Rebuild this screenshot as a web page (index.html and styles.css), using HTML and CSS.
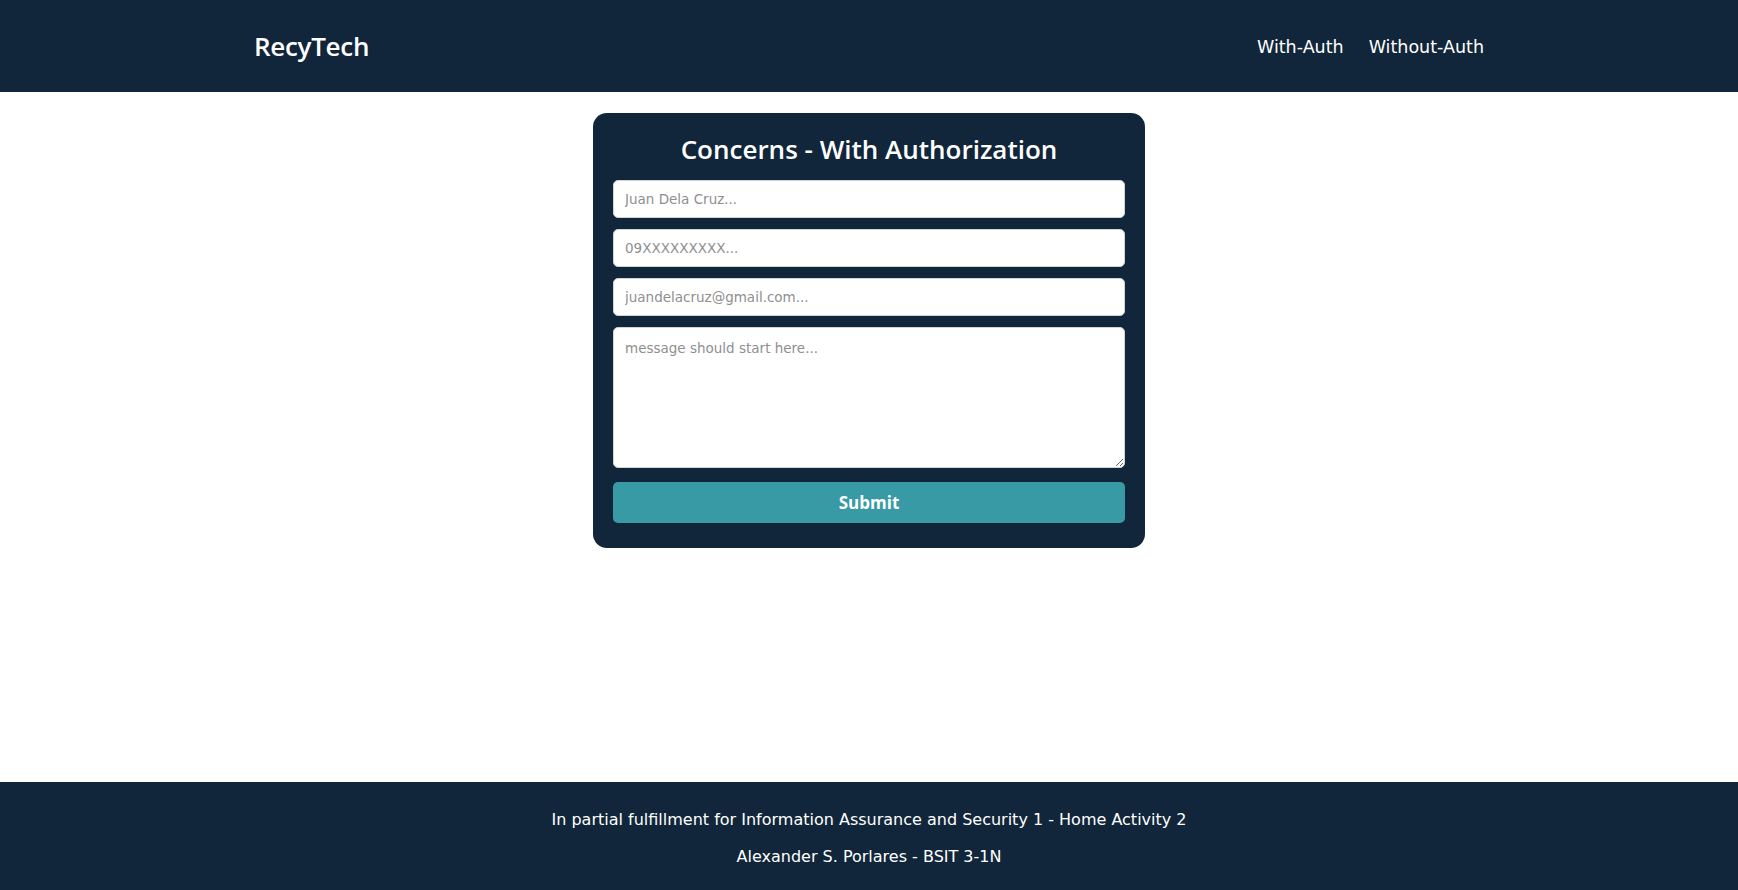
FILE: index.html
```html
<!DOCTYPE html>
<html lang="en">
<head>
<meta charset="utf-8">
<title>RecyTech - Concerns</title>
<link rel="stylesheet" href="styles.css">
</head>
<body>
<div class="page">
  <header class="topbar">
    <div class="topbar-inner">
      <a class="brand" href="#">RecyTech</a>
      <nav class="nav">
        <a class="nav-link" href="#">With-Auth</a>
        <a class="nav-link" href="#">Without-Auth</a>
      </nav>
    </div>
  </header>
  <main class="main">
    <form class="card">
      <h1 class="card-title">Concerns - With Authorization</h1>
      <input class="field" type="text" placeholder="Juan Dela Cruz...">
      <input class="field" type="text" placeholder="09XXXXXXXXX...">
      <input class="field" type="email" placeholder="juandelacruz@gmail.com...">
      <textarea class="field field-area" placeholder="message should start here..."></textarea>
      <button class="submit" type="button">Submit</button>
    </form>
  </main>
  <footer class="footer">
    <p class="footer-line">In partial fulfillment for Information Assurance and Security 1 - Home Activity 2</p>
    <p class="footer-line">Alexander S. Porlares - BSIT 3-1N</p>
  </footer>
</div>
</body>
</html>
```
FILE: styles.css
```css
* { box-sizing: border-box; }
html, body { margin: 0; padding: 0; }
body {
  font-family: "DejaVu Sans", "Open Sans", sans-serif;
  background: #ffffff;
  color: #ffffff;
}
.page {
  min-height: 890px;
  display: flex;
  flex-direction: column;
}
.topbar {
  background: #11263a;
  height: 92px;
  display: flex;
  align-items: center;
}
.topbar-inner {
  width: 1230px;
  margin: 0 auto;
  display: flex;
  align-items: center;
  justify-content: space-between;
}
.brand {
  color: #ffffff;
  text-decoration: none;
  font-family: "Open Sans", "DejaVu Sans", sans-serif;
  font-size: 26px;
  font-weight: 600;
  letter-spacing: -0.3px;
}
.nav {
  display: flex;
  gap: 25px;
  padding-top: 1px;
}
.nav-link {
  color: #ffffff;
  text-decoration: none;
  font-size: 17.5px;
}
.main {
  flex: 1;
  display: flex;
  justify-content: center;
  align-items: flex-start;
  padding-top: 21px;
}
.card {
  width: 552px;
  background: #11263a;
  border-radius: 14px;
  padding: 20px 20px 25px;
  display: flex;
  flex-direction: column;
}
.card-title {
  margin: 0 0 15px;
  font-family: "Open Sans", "DejaVu Sans", sans-serif;
  font-size: 26px;
  line-height: 32px;
  font-weight: 600;
  text-align: center;
  color: #ffffff;
}
.field {
  display: block;
  width: 100%;
  height: 38px;
  margin: 0 0 11px;
  padding: 0 11px;
  border: 1px solid #cfd4d8;
  border-radius: 5px;
  background: #ffffff;
  font-family: "DejaVu Sans", "Open Sans", sans-serif;
  font-size: 13.5px;
  color: #333333;
}
.field::placeholder { color: #8f8f8f; }
.field-area {
  height: 141px;
  padding: 12px 11px 10px;
  margin-bottom: 14px;
  resize: vertical;
}
.submit {
  height: 41px;
  border: none;
  border-radius: 5px;
  background: #389aa5;
  color: #ffffff;
  font-family: "Open Sans", "DejaVu Sans", sans-serif;
  font-size: 17px;
  font-weight: 700;
}
.footer {
  background: #11263a;
  height: 108px;
  display: flex;
  flex-direction: column;
  align-items: center;
  padding-top: 28px;
  gap: 17px;
}
.footer-line {
  margin: 0;
  font-size: 16px;
  line-height: 20px;
}
```
